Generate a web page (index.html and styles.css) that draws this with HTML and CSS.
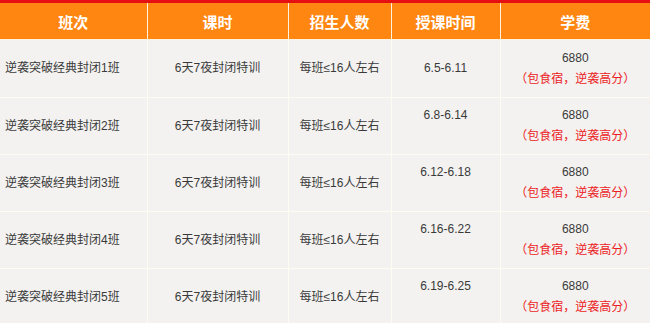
FILE: index.html
```html
<!DOCTYPE html>
<html lang="zh-CN">
<head>
  <meta charset="UTF-8">
  <title>逆袭突破经典封闭班</title>
  <link rel="stylesheet" href="styles.css">
</head>
<body>
  <div class="top-bar"></div>
  <table class="course-table">
    <colgroup>
      <col class="c-name">
      <col class="c-time">
      <col class="c-size">
      <col class="c-date">
      <col class="c-fee">
    </colgroup>
    <thead>
      <tr>
        <th>班次</th>
        <th>课时</th>
        <th>招生人数</th>
        <th>授课时间</th>
        <th>学费</th>
      </tr>
    </thead>
    <tbody>
      <tr class="first">
        <td class="name">逆袭突破经典封闭1班</td>
        <td>6天7夜封闭特训</td>
        <td>每班≤16人左右</td>
        <td>6.5-6.11</td>
        <td>6880<br><span class="note">（包食宿，逆袭高分）</span></td>
      </tr>
      <tr>
        <td class="name">逆袭突破经典封闭2班</td>
        <td>6天7夜封闭特训</td>
        <td>每班≤16人左右</td>
        <td>6.8-6.14<br>&nbsp;</td>
        <td>6880<br><span class="note">（包食宿，逆袭高分）</span></td>
      </tr>
      <tr>
        <td class="name">逆袭突破经典封闭3班</td>
        <td>6天7夜封闭特训</td>
        <td>每班≤16人左右</td>
        <td>6.12-6.18<br>&nbsp;</td>
        <td>6880<br><span class="note">（包食宿，逆袭高分）</span></td>
      </tr>
      <tr>
        <td class="name">逆袭突破经典封闭4班</td>
        <td>6天7夜封闭特训</td>
        <td>每班≤16人左右</td>
        <td>6.16-6.22<br>&nbsp;</td>
        <td>6880<br><span class="note">（包食宿，逆袭高分）</span></td>
      </tr>
      <tr>
        <td class="name">逆袭突破经典封闭5班</td>
        <td>6天7夜封闭特训</td>
        <td>每班≤16人左右</td>
        <td>6.19-6.25<br>&nbsp;</td>
        <td>6880<br><span class="note">（包食宿，逆袭高分）</span></td>
      </tr>
    </tbody>
  </table>
</body>
</html>
```

FILE: styles.css
```css
body {
  margin: 0;
  padding: 0;
  background-color: #f3f2f0;
  font-family: "Liberation Sans", "Noto Sans CJK SC", sans-serif;
  font-size: 12px;
  color: #3a3a3a;
}
.top-bar {
  height: 3px;
  background-color: #e50f14;
}
.course-table {
  width: 650px;
  border-collapse: collapse;
  table-layout: fixed;
}
.c-name {
  width: 147px;
}
.c-time {
  width: 141px;
}
.c-size {
  width: 103px;
}
.c-date {
  width: 109px;
}
.c-fee {
  width: 150px;
}
th {
  height: 36px;
  padding: 0;
  background-color: #ff8610;
  color: #fff;
  font-size: 15px;
  font-weight: bold;
  border: 1px solid #fff3e0;
  border-top: none;
}
th:first-child,
td:first-child {
  border-left: none;
}
th:last-child,
td:last-child {
  border-right: none;
}
td {
  height: 56px;
  padding: 0;
  text-align: center;
  vertical-align: middle;
  line-height: 21px;
  border: 1px solid #fffbf3;
}
tr.first td {
  height: 57px;
}
td.name {
  text-align: left;
  padding-left: 5px;
}
.note {
  color: #ec1c24;
}
```
